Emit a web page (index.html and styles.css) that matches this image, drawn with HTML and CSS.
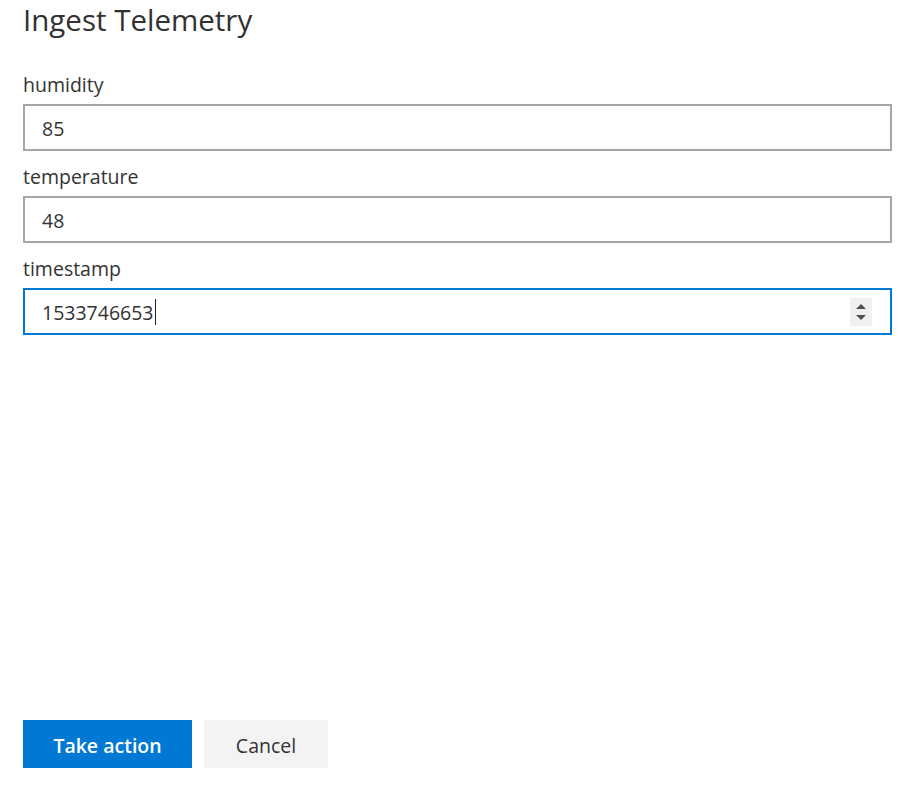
FILE: index.html
```html
<!DOCTYPE html>
<html lang="en">
<head>
<meta charset="utf-8">
<title>Ingest Telemetry</title>
<link rel="stylesheet" href="styles.css">
</head>
<body>
<div class="panel">
  <h1 class="title">Ingest Telemetry</h1>
  <div class="form">
    <div class="field">
      <div class="label">humidity</div>
      <div class="input"><span class="value">85</span></div>
    </div>
    <div class="field">
      <div class="label">temperature</div>
      <div class="input"><span class="value">48</span></div>
    </div>
    <div class="field">
      <div class="label">timestamp</div>
      <div class="input focused">
        <span class="value">1533746653</span><span class="caret"></span>
        <span class="spinner">
          <svg width="22" height="28" viewBox="0 0 22 28">
            <path d="M6 11 L11 6 L16 11 Z" fill="#505050"/>
            <path d="M6 17 L11 22 L16 17 Z" fill="#505050"/>
          </svg>
        </span>
      </div>
    </div>
  </div>
  <div class="footer">
    <button class="btn primary">Take action</button>
    <button class="btn secondary">Cancel</button>
  </div>
</div>
</body>
</html>
```
FILE: styles.css
```css
html, body {
  margin: 0;
  padding: 0;
  background: #ffffff;
}
body {
  font-family: "Open Sans", "Noto Sans", sans-serif;
  color: #333333;
}
.panel {
  height: 795px;
  box-sizing: border-box;
  padding: 0 19px 27px 23px;
  display: flex;
  flex-direction: column;
}
.title {
  margin: 0;
  font-size: 29.5px;
  line-height: 40px;
  font-weight: 400;
  color: #323130;
}
.form {
  margin-top: 31px;
  display: flex;
  flex-direction: column;
  gap: 12px;
}
.field {
  display: flex;
  flex-direction: column;
  gap: 5px;
}
.label {
  font-size: 19.5px;
  line-height: 28px;
  color: #333333;
}
.input {
  height: 47px;
  box-sizing: border-box;
  border: 2px solid #a6a6a6;
  display: flex;
  align-items: center;
  padding: 2px 18px 0 17px;
  font-size: 19.5px;
  color: #333333;
}
.input.focused {
  border-color: #0078d4;
  padding-right: 18px;
}
.caret {
  width: 1px;
  height: 26px;
  background: #222222;
  margin-left: 1px;
  margin-top: -2px;
}
.spinner {
  margin-left: auto;
  margin-top: -2px;
  width: 22px;
  height: 28px;
  background: #f0f0f0;
  display: flex;
}
.footer {
  margin-top: auto;
  display: flex;
  gap: 12px;
}
.btn {
  height: 48px;
  border: none;
  font-family: "Open Sans", "Noto Sans", sans-serif;
  font-size: 19.5px;
  padding: 2px 0 0 0;
  cursor: pointer;
}
.primary {
  width: 169px;
  background: #0078d4;
  color: #ffffff;
  font-weight: 600;
}
.secondary {
  width: 124px;
  background: #f3f3f3;
  color: #333333;
}
```
